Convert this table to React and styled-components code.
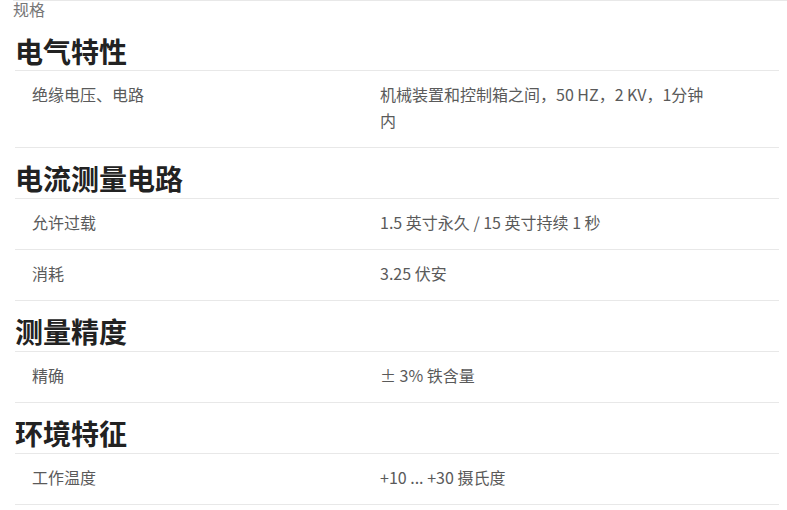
import React from 'react';
import styled, { createGlobalStyle } from 'styled-components';

//------------------------------------------------------------------------------
// STYLE:
//------------------------------------------------------------------------------
const GlobalStyle = createGlobalStyle`
  html, body {
    margin: 0;
    padding: 0;
    background: #fff;
  }
  body {
    font-family: "Noto Sans CJK SC", "Noto Sans", sans-serif;
  }
`;

const Page = styled.div`
  width: 787px;
  height: 510px;
  overflow: hidden;
`;

const Crumb = styled.div`
  margin-left: 13px;
  border-top: 1px solid #e8e8e8;
  font-size: 16px;
  line-height: 17px;
  color: #777;
`;

const Specs = styled.div`
  margin: 0 8px 0 15px;
`;

const SectionTitle = styled.h2`
  margin: 0;
  padding: ${({ $first }) => ($first ? '16px 0 2px' : '13px 0 3px')};
  font-size: 28px;
  line-height: 34px;
  font-weight: 700;
  color: #222;
  border-bottom: 1px solid #e8e8e8;
`;

const Row = styled.div`
  display: grid;
  grid-template-columns: 365px 325px 1fr;
  border-bottom: 1px solid #e8e8e8;
  font-size: 16px;
  line-height: 26px;
  color: #5a5a5a;
`;

const Label = styled.div`
  padding: 10px 0 14px 17px;
`;

const Value = styled.div`
  padding: 10px 0 14px;
`;

//------------------------------------------------------------------------------
// DATA:
//------------------------------------------------------------------------------
const sections = [
  {
    title: '电气特性',
    rows: [['绝缘电压、电路', '机械装置和控制箱之间，50 HZ，2 KV，1分钟内']],
  },
  {
    title: '电流测量电路',
    rows: [
      ['允许过载', '1.5 英寸永久 / 15 英寸持续 1 秒'],
      ['消耗', '3.25 伏安'],
    ],
  },
  {
    title: '测量精度',
    rows: [['精确', '± 3% 铁含量']],
  },
  {
    title: '环境特征',
    rows: [['工作温度', '+10 ... +30 摄氏度']],
  },
];

//------------------------------------------------------------------------------
// COMPONENT:
//------------------------------------------------------------------------------
const App = () => (
  <Page>
    <GlobalStyle />
    <Crumb>规格</Crumb>
    <Specs>
      {sections.map((section, i) => (
        <React.Fragment key={section.title}>
          <SectionTitle $first={i === 0}>{section.title}</SectionTitle>
          {section.rows.map(([label, value]) => (
            <Row key={label}>
              <Label>{label}</Label>
              <Value>{value}</Value>
            </Row>
          ))}
        </React.Fragment>
      ))}
    </Specs>
  </Page>
);

export default App;
